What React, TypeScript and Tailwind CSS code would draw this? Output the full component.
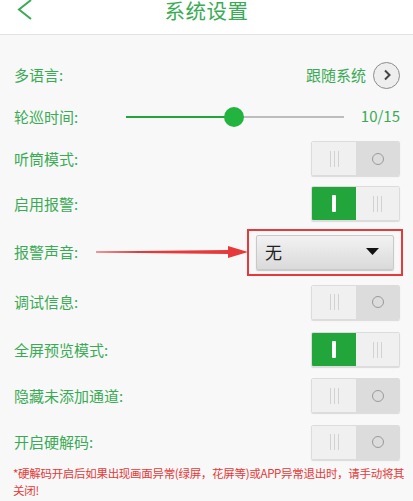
import type { ReactNode } from 'react';

const font = { fontFamily: '"Noto Sans CJK SC", "Noto Sans", sans-serif' };

function Toggle({ on }: { on: boolean }) {
  const lines = (
    <div className="flex gap-[3px]">
      <span className="h-[16px] w-px bg-[#d2d2d2]" />
      <span className="h-[16px] w-px bg-[#d2d2d2]" />
      <span className="h-[16px] w-px bg-[#d2d2d2]" />
    </div>
  );
  return (
    <div className="flex h-[35px] w-[89px] overflow-hidden rounded-[2px] border border-[#dcdcdc] shadow-[0_1px_1px_rgba(0,0,0,0.12)]">
      {on ? (
        <>
          <div className="flex w-[44px] items-center justify-center bg-[#22a53b]">
            <span className="h-[17px] w-[4px] rounded-[1px] bg-white" />
          </div>
          <div className="flex flex-1 items-center justify-center bg-[#f0f0f0]">{lines}</div>
        </>
      ) : (
        <>
          <div className="flex w-[44px] items-center justify-center bg-[#f0f0f0]">{lines}</div>
          <div className="flex flex-1 items-center justify-center bg-[#dcdcdc]">
            <span className="h-[12px] w-[12px] rounded-full border-[1.5px] border-[#9a9a9a]" />
          </div>
        </>
      )}
    </div>
  );
}

function Row({ label, h, children }: { label: string; h: string; children?: ReactNode }) {
  return (
    <div className={`relative flex items-center justify-between pl-[14px] pr-[13px] ${h}`}>
      <span className="text-[15px] leading-[20px] text-[#3aab55]">{label}</span>
      {children}
    </div>
  );
}

export default function App() {
  return (
    <div className="h-[501px] w-[413px] overflow-hidden bg-[#f8f8f8]" style={font}>
      <div className="relative flex h-[35px] items-start justify-center border-b border-[#e2e2e2] bg-white">
        <svg className="absolute left-[17px] top-0" width="16" height="20" viewBox="0 0 16 20">
          <path d="M14 0 L2 9.5 L14 19" fill="none" stroke="#3aab55" strokeWidth="2" />
        </svg>
        <span className="-mt-[1px] text-[20.5px] leading-[22px] tracking-[0.5px] text-[#3aab55]">系统设置</span>
      </div>

      <div className="pt-[19px]">
        <Row label="多语言:" h="h-[42px]">
          <div className="flex items-center gap-[7px]">
            <span className="text-[15px] text-[#3aab55]">跟随系统</span>
            <div className="flex h-[27px] w-[27px] items-center justify-center rounded-full border-[1.5px] border-[#8c8c8c] bg-[#eeeeee]">
              <svg width="10" height="12" viewBox="0 0 10 12">
                <path d="M3 1.5 L7.5 6 L3 10.5" fill="none" stroke="#444" strokeWidth="2" />
              </svg>
            </div>
          </div>
        </Row>

        <Row label="轮巡时间:" h="h-[41px]">
          <div className="flex items-center">
            <div className="relative mr-[17px] h-[20px] w-[218px]">
              <div className="absolute left-0 top-[9px] h-[2px] w-[108px] bg-[#22a53b]" />
              <div className="absolute right-0 top-[9px] h-[2px] w-[110px] bg-[#bdbdbd]" />
              <div className="absolute left-[98px] top-0 h-[20px] w-[20px] rounded-full bg-[#22b43f]" />
            </div>
            <span className="text-[15px] text-[#3aab55]">10/15</span>
          </div>
        </Row>

        <Row label="听筒模式:" h="h-[43px]">
          <Toggle on={false} />
        </Row>

        <Row label="启用报警:" h="h-[47px]">
          <Toggle on={true} />
        </Row>

        <Row label="报警声音:" h="h-[50px]">
          <svg className="absolute left-[96px] top-[16px]" width="152" height="18" viewBox="0 0 152 18">
            <polygon points="0,8.5 132,7 132,3 152,9 132,15 132,11 0,9.5" fill="#e8393a" />
          </svg>
          <div className="-mr-[3px] flex h-[47px] w-[156px] items-center justify-center border-2 border-[#e8393a]">
            <div className="flex h-[35px] w-[138px] items-center justify-between rounded-[2px] border border-[#c9c9c9] bg-gradient-to-b from-[#f2f2f2] to-[#dadada] pl-[8px] pr-[14px] shadow-[0_1px_1px_rgba(0,0,0,0.2)]">
              <span className="text-[17px] text-[#222]">无</span>
              <svg width="13" height="8" viewBox="0 0 13 8">
                <polygon points="0,0 13,0 6.5,7" fill="#111" />
              </svg>
            </div>
          </div>
        </Row>

        <Row label="调试信息:" h="h-[50px]">
          <Toggle on={false} />
        </Row>

        <Row label="全屏预览模式:" h="h-[45px]">
          <Toggle on={true} />
        </Row>

        <Row label="隐藏未添加通道:" h="h-[47px]">
          <Toggle on={false} />
        </Row>

        <Row label="开启硬解码:" h="h-[46px]">
          <Toggle on={false} />
        </Row>

        <p className="pl-[13px] pr-[8px] text-[11.5px] leading-[17px] tracking-[-0.3px] text-[#e53a3a]">
          *硬解码开启后如果出现画面异常(绿屏，花屏等)或APP异常退出时，请手动将其关闭!
        </p>
      </div>
    </div>
  );
}
